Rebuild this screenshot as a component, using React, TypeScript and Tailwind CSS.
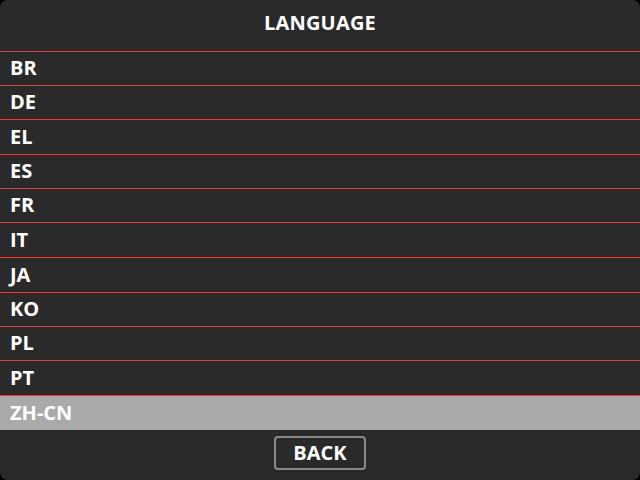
import React from "react";

const rows: { label: string; h: string; line: string; selected?: boolean }[] = [
  { label: "BR", h: "h-[34px]", line: "border-[#d44444]" },
  { label: "DE", h: "h-[34px]", line: "border-[#d44444]" },
  { label: "EL", h: "h-[35px]", line: "border-[#ff3030]" },
  { label: "ES", h: "h-[34px]", line: "border-[#ff3030]" },
  { label: "FR", h: "h-[34px]", line: "border-[#d44444]" },
  { label: "IT", h: "h-[35px]", line: "border-[#d44444]" },
  { label: "JA", h: "h-[35px]", line: "border-[#ff3030]" },
  { label: "KO", h: "h-[34px]", line: "border-[#ff3030]" },
  { label: "PL", h: "h-[34px]", line: "border-[#d44444]" },
  { label: "PT", h: "h-[35px]", line: "border-[#d44444]" },
  { label: "ZH-CN", h: "h-[35px]", line: "border-[#ff3030]", selected: true },
];

export default function App() {
  return (
    <div className="w-[640px] h-[480px] bg-black">
      <div
        className="w-[640px] h-[480px] bg-[#2a2a2a] rounded-[8px] overflow-hidden flex flex-col text-white font-bold"
        style={{ fontFamily: '"Open Sans", "Noto Sans", sans-serif' }}
      >
        <div className="h-[51px] flex items-center justify-center text-[20px] pb-[6px] tracking-[0.2px]">
          LANGUAGE
        </div>
        {rows.map((r) => (
          <div
            key={r.label}
            className={`${r.h} border-t ${r.line} flex items-center pl-[10px] text-[20px] pb-[1px] ${
              r.selected ? "bg-[#aaaaaa]" : ""
            }`}
          >
            {r.label}
          </div>
        ))}
        <div className="flex-1 flex items-center justify-center pb-[4px]">
          <div className="w-[92px] h-[34px] border-2 border-[#888888] rounded-[4px] flex items-center justify-center text-[20px]">
            BACK
          </div>
        </div>
      </div>
    </div>
  );
}
